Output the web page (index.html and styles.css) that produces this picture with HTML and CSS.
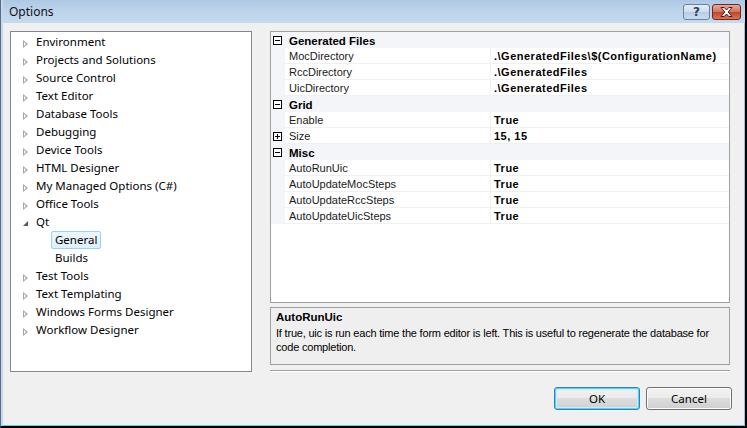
FILE: index.html
```html
<!DOCTYPE html>
<html>
<head>
<meta charset="utf-8">
<link rel="stylesheet" href="styles.css">
</head>
<body>
<div class="window">
  <div class="titlebar">
    <span class="title">Options</span>
    <div class="caption-btns">
      <div class="cbtn help"><span>?</span></div>
      <div class="cbtn close">
        <svg width="15" height="10" viewBox="0 0 15 10"><path d="M2 0.5h3.2l2.3 2.5 2.3-2.5h3.2l-3.8 4.5 3.8 4.5h-3.2l-2.3-2.5-2.3 2.5h-3.2l3.8-4.5z" fill="#fff" stroke="#4a1a14" stroke-width="1"/></svg>
      </div>
    </div>
  </div>
  <div class="client">
    <div class="main">
      <div class="tree">
        <div class="node"><span class="tri"></span>Environment</div>
        <div class="node"><span class="tri"></span>Projects and Solutions</div>
        <div class="node"><span class="tri"></span>Source Control</div>
        <div class="node"><span class="tri"></span>Text Editor</div>
        <div class="node"><span class="tri"></span>Database Tools</div>
        <div class="node"><span class="tri"></span>Debugging</div>
        <div class="node"><span class="tri"></span>Device Tools</div>
        <div class="node"><span class="tri"></span>HTML Designer</div>
        <div class="node"><span class="tri"></span>My Managed Options (C#)</div>
        <div class="node"><span class="tri"></span>Office Tools</div>
        <div class="node"><span class="tri open"></span>Qt</div>
        <div class="node child"><span class="sel">General</span></div>
        <div class="node child"><span class="plain">Builds</span></div>
        <div class="node"><span class="tri"></span>Test Tools</div>
        <div class="node"><span class="tri"></span>Text Templating</div>
        <div class="node"><span class="tri"></span>Windows Forms Designer</div>
        <div class="node"><span class="tri"></span>Workflow Designer</div>
      </div>
      <div class="right">
        <div class="grid">
          <div class="cat"><span class="pm minus"></span><span class="catname">Generated Files</span></div>
          <div class="prop"><span class="gut"></span><span class="pname">MocDirectory</span><span class="pval">.\GeneratedFiles\$(ConfigurationName)</span></div>
          <div class="prop"><span class="gut"></span><span class="pname">RccDirectory</span><span class="pval">.\GeneratedFiles</span></div>
          <div class="prop"><span class="gut"></span><span class="pname">UicDirectory</span><span class="pval">.\GeneratedFiles</span></div>
          <div class="cat"><span class="pm minus"></span><span class="catname">Grid</span></div>
          <div class="prop"><span class="gut"></span><span class="pname">Enable</span><span class="pval">True</span></div>
          <div class="prop"><span class="gut"><span class="pm plus"></span></span><span class="pname">Size</span><span class="pval">15, 15</span></div>
          <div class="cat"><span class="pm minus"></span><span class="catname">Misc</span></div>
          <div class="prop"><span class="gut"></span><span class="pname">AutoRunUic</span><span class="pval">True</span></div>
          <div class="prop"><span class="gut"></span><span class="pname">AutoUpdateMocSteps</span><span class="pval">True</span></div>
          <div class="prop"><span class="gut"></span><span class="pname">AutoUpdateRccSteps</span><span class="pval">True</span></div>
          <div class="prop"><span class="gut"></span><span class="pname">AutoUpdateUicSteps</span><span class="pval">True</span></div>
        </div>
        <div class="desc">
          <div class="desc-title">AutoRunUic</div>
          <div class="desc-text">If true, uic is run each time the form editor is left. This is useful to regenerate the database for code completion.</div>
        </div>
        <div class="sep"></div>
      </div>
    </div>
    <div class="buttons">
      <div class="btn default">OK</div>
      <div class="btn">Cancel</div>
    </div>
  </div>
</div>
</body>
</html>
```
FILE: styles.css
```css
html, body { margin: 0; padding: 0; background: #000; }
.window {
  width: 747px; height: 428px; box-sizing: border-box;
  display: flex; flex-direction: column;
  border-left: 1px solid #5d6b7c;
  border-right: 2px solid #000;
  border-bottom: 2px solid #000;
  background: #c2d7ed;
  overflow: hidden;
}
.titlebar {
  height: 23px; flex: none;
  display: flex; align-items: center; justify-content: space-between;
  background: linear-gradient(180deg, #aec8e4 0%, #bcd3eb 45%, #c6dbef 100%);
  padding: 0 4px 0 4px;
  border-left: 2px solid #c4d9ee;
  font-family: "Noto Sans", sans-serif;
}
.title { font-size: 12px; color: #111; margin-left: 2px; margin-top: -1px; }
.caption-btns { display: flex; gap: 2px; align-self: flex-start; margin-top: 4px; }
.cbtn {
  height: 16px; box-sizing: border-box; border-radius: 3px;
  display: flex; align-items: center; justify-content: center;
}
.help {
  width: 27px;
  border: 1px solid #6d819b;
  background: linear-gradient(180deg, #e4edf7 0%, #ccdcee 50%, #b8cde5 51%, #c8dbef 100%);
  color: #2f3f55; font-family: "DejaVu Sans", sans-serif; font-size: 12px; font-weight: bold;
}
.help span { margin-top: -1px; }
.close {
  width: 29px;
  border: 1px solid #6e2a22;
  background: linear-gradient(180deg, #e9a99c 0%, #d4705c 50%, #c0432c 51%, #d7784f 100%);
}
.client {
  flex: 1; display: flex; flex-direction: column;
  background: #f0f0f0;
  border-left: 2px solid #c4d9ee;
  border-right: 1px solid #89c6ec;
  border-bottom: 1px solid #58cfee;
  padding: 8px 12px 0 7px;
}
.main { display: flex; gap: 18px; height: 341px; flex: none; }
.tree {
  width: 242px; height: 341px; box-sizing: border-box;
  border: 1px solid #828790; background: #fff;
  padding-top: 1px;
  font-family: "Noto Sans", sans-serif; font-size: 11.5px; color: #000;
}
.node { height: 18px; line-height: 18px; display: flex; align-items: center; padding-left: 11px; white-space: nowrap; }
.tri {
  width: 0; height: 0; margin-right: 8px; margin-top: 3px; margin-left: 1px;
  border-top: 4px solid transparent; border-bottom: 4px solid transparent;
  border-left: 5px solid #a6a6a6; position: relative;
}
.tri::after {
  content: ""; position: absolute; left: -4px; top: -2px;
  border-top: 2px solid transparent; border-bottom: 2px solid transparent;
  border-left: 2px solid #fff;
}
.tri.open {
  border: none; width: 0; height: 0;
  border-bottom: 5px solid #595959; border-left: 5px solid transparent;
  margin-top: 2px; margin-right: 8px;
}
.tri.open::after { display: none; }
.child { padding-left: 40px; }
.sel {
  display: inline-block; height: 16px; line-height: 15px;
  padding: 0 3px;
  border: 1px solid #9ad3f2; border-radius: 2px;
  background: linear-gradient(180deg, #eef7fd, #dcf0fc);
}
.plain { display: inline-block; margin-left: 4px; }

.right { width: 460px; display: flex; flex-direction: column; }
.grid {
  height: 272px; box-sizing: border-box; flex: none;
  border: 1px solid #a0a0a0; background: #fff;
  font-family: "Liberation Sans", Arial, sans-serif; font-size: 11px; color: #000;
}
.cat {
  height: 16px; display: flex; align-items: center;
  background: #f3f5f9;
  font-weight: bold; font-size: 11.5px;
}
.catname { padding-top: 2px; }
.cat .pm { margin-left: 2px; margin-right: 7px; }
.prop { height: 16px; display: flex; background: #f3f5f9; }
.gut { width: 14px; flex: none; display: flex; align-items: center; }
.gut .pm { margin-left: 2px; }
.pname {
  width: 206px; flex: none; box-sizing: border-box;
  background: #fff; padding-left: 4px; padding-top: 1px; line-height: 14px;
  border-bottom: 1px solid #f0f0f0; border-right: 1px solid #f0f0f0;
  color: #1a1a1a;
}
.pval {
  flex: 1; background: #fff; padding-left: 3px; padding-top: 1px; line-height: 14px;
  border-bottom: 1px solid #f0f0f0; font-weight: bold; white-space: nowrap;
  letter-spacing: 0.5px;
}
.pm {
  width: 9px; height: 9px; box-sizing: border-box; flex: none;
  border: 1px solid #000; background: #fff; position: relative;
}
.pm::before {
  content: ""; position: absolute; left: 1px; top: 3px; width: 5px; height: 1px; background: #000;
}
.pm.plus::after {
  content: ""; position: absolute; left: 3px; top: 1px; width: 1px; height: 5px; background: #000;
}
.desc {
  margin-top: 4px; height: 58px; box-sizing: border-box; flex: none;
  border: 1px solid #a0a0a0; background: #efefef;
  padding: 2px 6px 0 5px;
  font-family: "Liberation Sans", Arial, sans-serif; font-size: 11px; color: #000;
  line-height: 14px;
}
.desc-title { font-weight: bold; font-size: 11.5px; height: 16px; line-height: 14px; }
.desc-text { letter-spacing: -0.2px; }
.sep { margin-top: 5px; height: 1px; background: #a0a0a0; border-bottom: 1px solid #fff; }

.buttons { display: flex; justify-content: flex-end; gap: 6px; margin-top: 15px; }
.btn {
  width: 86px; height: 23px; box-sizing: border-box;
  border: 1px solid #707070; border-radius: 3px;
  background: linear-gradient(180deg, #f2f2f2 0%, #ebebeb 49%, #dddddd 50%, #cfcfcf 100%);
  box-shadow: inset 0 0 0 1px #fcfcfc;
  display: flex; align-items: center; justify-content: center;
  font-family: "Noto Sans", sans-serif; font-size: 11.5px; color: #000;
}
.btn.default {
  border-color: #3c7fb1;
  box-shadow: inset 0 0 0 1px #48d8fb, inset 0 0 0 2px #c5eefc;
}
```
